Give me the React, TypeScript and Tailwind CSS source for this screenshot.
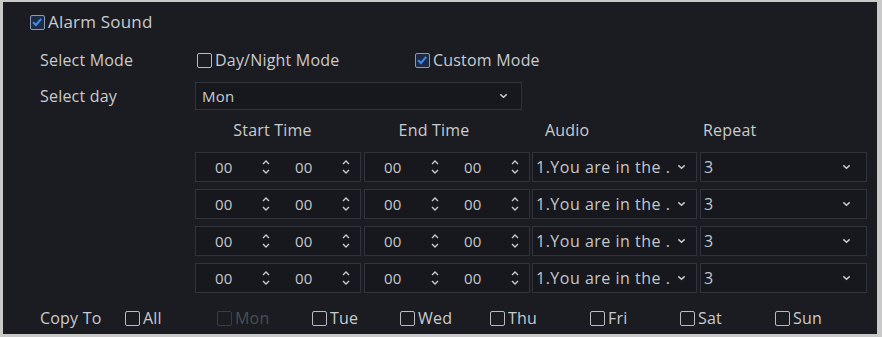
import React from 'react';

const font = { fontFamily: '"Open Sans", "Noto Sans", "Liberation Sans", sans-serif' };

function Box({ checked, disabled }: { checked?: boolean; disabled?: boolean }) {
  return (
    <span
      className={
        'relative inline-block w-[15px] h-[15px] rounded-[2px] border-[1.5px] shrink-0 ' +
        (disabled ? 'border-[#3a3d44]' : checked ? 'border-[#8a9bb5] bg-[#1d2c44]' : 'border-[#b9bbbf]')
      }
    >
      {checked && (
        <svg viewBox="0 0 14 14" className="absolute -left-[1px] -top-[1px] w-[14px] h-[14px]">
          <path d="M3 7.2 L6 10 L11.2 3.8" fill="none" stroke="#3f8cf0" strokeWidth="2" />
        </svg>
      )}
    </span>
  );
}

function Check({ label, checked, disabled }: { label: string; checked?: boolean; disabled?: boolean }) {
  return (
    <span className={'flex items-center gap-[3px] ' + (disabled ? 'text-[#4a4d53]' : 'text-[#c9cbcf]')}>
      <Box checked={checked} disabled={disabled} />
      {label}
    </span>
  );
}

function Chevron() {
  return (
    <svg viewBox="0 0 10 6" className="w-[9px] h-[6px]">
      <path d="M1.5 1.2 L5 4.5 L8.5 1.2" fill="none" stroke="#c8cace" strokeWidth="1.6" />
    </svg>
  );
}

function Spinner() {
  return (
    <svg viewBox="0 0 10 18" className="w-[10px] h-[18px]">
      <path d="M2 6 L5 3 L8 6" fill="none" stroke="#c8cace" strokeWidth="1.4" />
      <path d="M2 12 L5 15 L8 12" fill="none" stroke="#c8cace" strokeWidth="1.4" />
    </svg>
  );
}

function TimeBox() {
  return (
    <div className="w-[166px] h-[30px] border border-[#30333a] bg-[#16181d] flex items-center text-[15px] text-[#c5c7cb]">
      <span className="w-[60px] pl-[19px]">00</span>
      <span className="w-[20px] flex justify-center"><Spinner /></span>
      <span className="w-[60px] pl-[19px]">00</span>
      <span className="w-[20px] flex justify-center"><Spinner /></span>
    </div>
  );
}

function Row() {
  return (
    <div className="flex h-[30px]">
      <TimeBox />
      <div className="w-[3px]" />
      <TimeBox />
      <div className="w-[2px]" />
      <div className="w-[165px] h-[30px] border border-[#30333a] bg-[#16181d] flex items-center justify-between pl-[3px] pr-[10px] text-[#c5c7cb]">
        <span className="tracking-[0.5px] whitespace-nowrap">1.You are in the .</span>
        <Chevron />
      </div>
      <div className="w-[3px]" />
      <div className="w-[167px] h-[30px] border border-[#30333a] bg-[#16181d] flex items-center justify-between pl-[3px] pr-[15px] text-[#c5c7cb]">
        <span>3</span>
        <Chevron />
      </div>
    </div>
  );
}

export default function App() {
  const days: [string, number, boolean?][] = [
    ['Mon', 95, true],
    ['Tue', 88],
    ['Wed', 90],
    ['Thu', 100],
    ['Fri', 90],
    ['Sat', 95],
    ['Sun', 60],
  ];
  return (
    <div className="w-[882px] h-[337px] bg-[#c9c9c9] pt-[2px] pl-[3px] pr-[5px] pb-[3px]" style={font}>
      <div className="w-full h-full bg-[#1a1c21] text-[16px] tracking-[0.2px] text-[#c9cbcf] overflow-hidden">
        <div className="flex items-center h-[40px] pl-[27px] text-[17px]">
          <Check label="Alarm Sound" checked />
        </div>
        <div className="flex items-center h-[36px] pl-[37px]">
          <span className="w-[157px]">Select Mode</span>
          <span className="w-[218px]"><Check label="Day/Night Mode" /></span>
          <Check label="Custom Mode" checked />
        </div>
        <div className="flex items-center h-[36px] pl-[37px]">
          <span className="w-[155px]">Select day</span>
          <div className="w-[327px] h-[28px] border border-[#30333a] bg-[#16181d] flex items-center justify-between pl-[6px] pr-[13px] text-[15px]">
            <span>Mon</span>
            <Chevron />
          </div>
        </div>
        <div className="flex items-center h-[32px] pl-[192px]">
          <span className="w-[169px] text-center pr-[14px]">Start Time</span>
          <span className="w-[168px] text-center pr-[28px]">End Time</span>
          <span className="w-[168px] pl-[13px]">Audio</span>
          <span className="pl-[3px]">Repeat</span>
        </div>
        <div className="flex flex-col gap-[7px] pl-[192px] mt-[6px]">
          <Row />
          <Row />
          <Row />
          <Row />
        </div>
        <div className="flex items-center h-[30px] mt-[10px] pl-[37px]">
          <span className="w-[85px]">Copy To</span>
          <span className="w-[92px]"><Check label="All" /></span>
          {days.map(([d, w, dis]) => (
            <span key={d} style={{ width: w }}>
              <Check label={d} disabled={dis} />
            </span>
          ))}
        </div>
      </div>
    </div>
  );
}
